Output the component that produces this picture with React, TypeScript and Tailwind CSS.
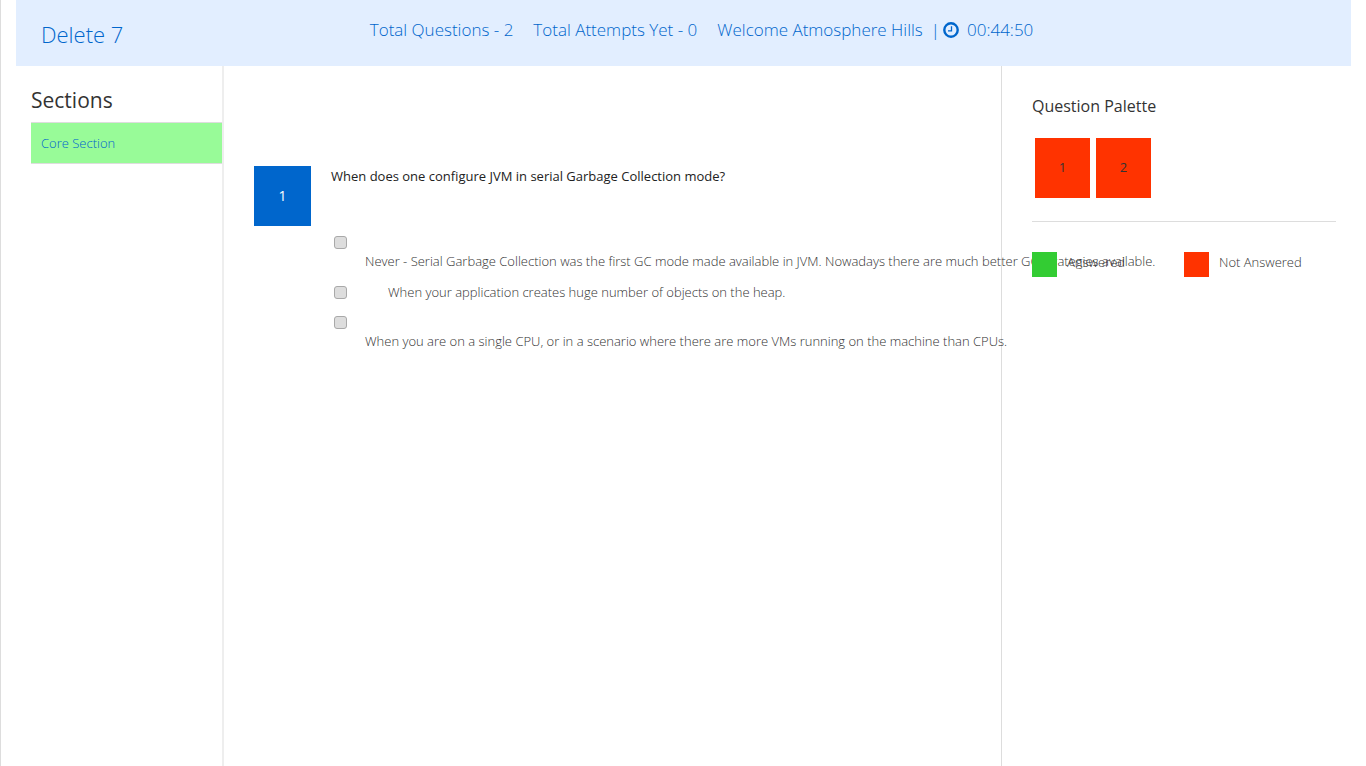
import React from "react";

const options = [
  {
    id: "option-1",
    text: "Never - Serial Garbage Collection was the first GC mode made available in JVM. Nowadays there are much better GC strategies available.",
    inline: false,
  },
  {
    id: "option-2",
    text: "When your application creates huge number of objects on the heap.",
    inline: true,
  },
  {
    id: "option-3",
    text: "When you are on a single CPU, or in a scenario where there are more VMs running on the machine than CPUs.",
    inline: false,
  },
];

function ClockIcon() {
  return (
    <svg viewBox="0 0 16 16" className="h-4 w-4" fill="none" stroke="currentColor" aria-hidden="true">
      <circle cx="8" cy="8" r="6.7" strokeWidth="2.4" />
      <path d="M8.5 4.2V8.9H5" strokeWidth="1.3" />
    </svg>
  );
}

function Header() {
  return (
    <header className="flex h-[66px] bg-[#e2eeff] text-[#0066cc]">
      <h1 className="w-[26.5%] pt-4 pl-[25px] text-[22px] leading-9 font-light">Delete 7</h1>
      <div className="flex items-start gap-5 pt-4 text-[17px] leading-7 font-light whitespace-nowrap">
        <span>Total Questions - 2</span>
        <span>Total Attempts Yet - 0</span>
        <span>Welcome Atmosphere Hills</span>
        <span className="-ml-3 flex items-center gap-[3px]">
          <span>|</span>
          <ClockIcon />
          <span className="pl-[5px]">00:44:50</span>
        </span>
      </div>
    </header>
  );
}

function Sections() {
  return (
    <nav className="min-w-0 pt-[18px] pl-[15px]">
      <h2 className="pb-[6px] text-[21px] leading-8 text-[#333]">Sections</h2>
      <a
        href="#core"
        className="block border-y border-[#ddd] bg-[#98fb98] px-[10px] text-[13px] leading-10 font-light text-[#0066cc]"
      >
        Core Section
      </a>
    </nav>
  );
}

function Question() {
  return (
    <main className="flex min-w-0 items-start gap-5 border-r border-l-2 border-r-[#ddd] border-l-[#eee] pt-[100px] pl-[30px] text-[#333]">
      <div className="flex h-[60px] w-[57px] shrink-0 items-center justify-center bg-[#0066cc] text-sm text-white">
        1
      </div>
      <div className="min-w-0">
        <p className="text-[13px] leading-5 text-[#222]">
          When does one configure JVM in serial Garbage Collection mode?
        </p>
        <ul className="pt-[50px] text-[13px] leading-5 font-light whitespace-nowrap">
          {options.map((o) => (
            <li key={o.id} className={o.inline ? "mb-[17px] flex items-start" : "mb-[15px]"}>
              <input
                id={o.id}
                type="checkbox"
                className="ml-[3px] block h-[13px] w-[13px] appearance-none rounded-[3px] border border-[#a9a9a9] bg-[#dddddd]"
              />
              <label htmlFor={o.id} className={o.inline ? "pl-[41px] leading-3" : "block pt-[2px] pl-[34px]"}>
                {o.text}
              </label>
            </li>
          ))}
        </ul>
      </div>
    </main>
  );
}

function Palette() {
  return (
    <aside className="min-w-0 pt-[26px] pr-[15px] pl-[30px] text-[#333]">
      <h3 className="text-base leading-7">Question Palette</h3>
      <div className="flex gap-[6px] pt-[18px] pb-[23px] pl-[3px]">
        {[1, 2].map((n) => (
          <a
            key={n}
            href={"#question-" + n}
            className="flex h-[60px] w-[55px] items-center justify-center bg-[#ff3300] text-[13px]"
          >
            {n}
          </a>
        ))}
      </div>
      <div className="grid grid-cols-2 border-t border-[#ddd] pt-[30px] text-[13px] leading-5 font-light whitespace-nowrap">
        <div className="flex items-start gap-[10px]">
          <span className="relative h-[25px] w-[25px] bg-[#33cc33]" />
          Answered
        </div>
        <div className="flex items-start gap-[10px]">
          <span className="h-[25px] w-[25px] bg-[#ff3300]" />
          Not Answered
        </div>
      </div>
    </aside>
  );
}

export default function App() {
  return (
    <div className="flex min-h-screen flex-col overflow-hidden border-l border-[#ddd] bg-white px-[15px] font-['Open_Sans',sans-serif]">
      <Header />
      <div className="grid flex-1 grid-cols-[206fr_780fr_349fr]">
        <Sections />
        <Question />
        <Palette />
      </div>
    </div>
  );
}
